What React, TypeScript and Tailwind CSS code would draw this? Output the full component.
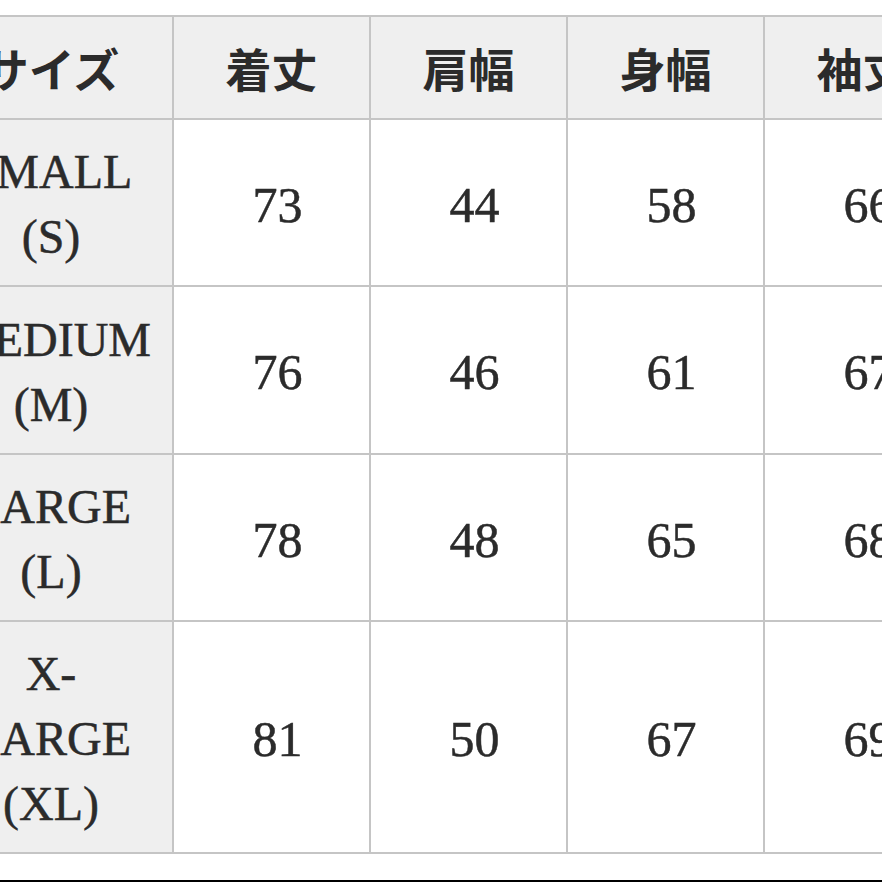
const headers = ['サイズ', '着丈', '肩幅', '身幅', '袖丈'];

const rows = [
  { size: ['SMALL', '(S)'], values: ['73', '44', '58', '66'], h: 'h-[165px]' },
  { size: ['MEDIUM', '(M)'], values: ['76', '46', '61', '67'], h: 'h-[166px]' },
  { size: ['LARGE', '(L)'], values: ['78', '48', '65', '68'], h: 'h-[165px]' },
  { size: ['X-', 'LARGE', '(XL)'], values: ['81', '50', '67', '69'], h: 'h-[230px]' },
];

const serif =
  "font-['Liberation_Serif','Noto_Sans_CJK_JP',serif] [-webkit-text-stroke:0.5px_#2b2b2b]";

export default function App() {
  return (
    <div className="flex h-[882px] w-[882px] flex-col overflow-hidden bg-white text-[#2b2b2b]">
      <div className="mt-[15px] ml-[-72px] w-max bg-[#c5c5c5] p-[2px]">
        <div className="grid grid-cols-[242px_195px_195px_195px_195px] gap-[2px]">
          {headers.map((h) => (
            <div
              key={h}
              className="flex h-[101px] items-center justify-center bg-[#efefef] font-['Noto_Sans_CJK_JP',sans-serif] text-[46px] font-bold"
            >
              {h}
            </div>
          ))}
          {rows.map((row) => (
            <>
              <div
                key={row.size.join('')}
                className={`flex ${row.h} flex-col items-center justify-center bg-[#efefef] pt-[3px] ${serif} text-[48px] leading-[65px]`}
              >
                {row.size.map((line) => (
                  <span key={line}>{line}</span>
                ))}
              </div>
              {row.values.map((v, i) => (
                <div
                  key={row.size[0] + i}
                  className={`flex ${row.h} items-center justify-center bg-white pt-[5px] pl-[12px] ${serif} text-[50px] leading-[65px]`}
                >
                  {v}
                </div>
              ))}
            </>
          ))}
        </div>
      </div>
      <div className="mt-auto h-[2px] w-full bg-black" />
    </div>
  );
}
